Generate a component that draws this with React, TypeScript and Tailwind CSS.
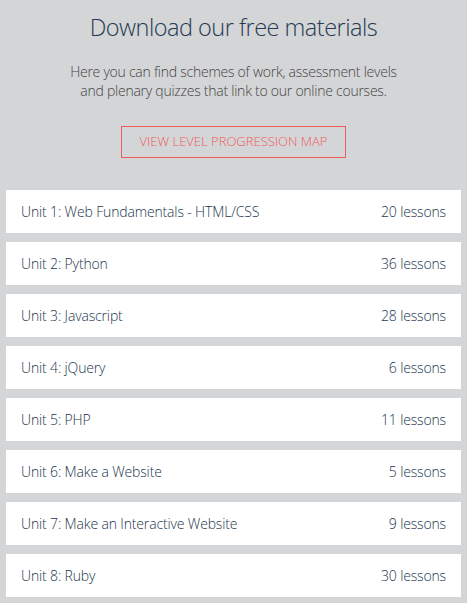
export default function App() {
    const units = [
        { name: "Unit 1: Web Fundamentals - HTML/CSS", lessons: 20 },
        { name: "Unit 2: Python", lessons: 36 },
        { name: "Unit 3: Javascript", lessons: 28 },
        { name: "Unit 4: jQuery", lessons: 6 },
        { name: "Unit 5: PHP", lessons: 11 },
        { name: "Unit 6: Make a Website", lessons: 5 },
        { name: "Unit 7: Make an Interactive Website", lessons: 9 },
        { name: "Unit 8: Ruby", lessons: 30 },
    ]

    return (
        <div className="min-h-screen bg-[#d4d5d7] font-['Open_Sans',sans-serif] font-light">
            {/* Header */}
            <section className="pt-[12px] text-center">
                <h1 className="text-[23.5px] leading-[30px] text-[#253a52] tracking-[-0.5px]">Download our free materials</h1>
                <p className="mt-[20px] text-[14px] leading-[19px] text-[#444] tracking-[-0.25px]">
                    Here you can find schemes of work, assessment levels
                    <br />
                    and plenary quizzes that link to our online courses.
                </p>
                <div className="mt-[26px] flex justify-center">
                    <a
                        href="#"
                        className="w-[225px] h-[32px] flex items-center justify-center border border-[#f05b5b] text-[#f05b5b] text-[13px] uppercase"
                    >
                        View level progression map
                    </a>
                </div>
            </section>

            {/* Units list */}
            <section className="mt-[32px] px-[6px] flex flex-col gap-[9px] pb-[7px]">
                {units.map((u) => (
                    <div
                        key={u.name}
                        className="h-[43px] bg-white flex items-center justify-between pl-[15px] pr-[15px] text-[14px] text-[#23364c] tracking-[-0.15px]"
                    >
                        <span>{u.name}</span>
                        <span>{u.lessons} lessons</span>
                    </div>
                ))}
            </section>
        </div>
    )
}
